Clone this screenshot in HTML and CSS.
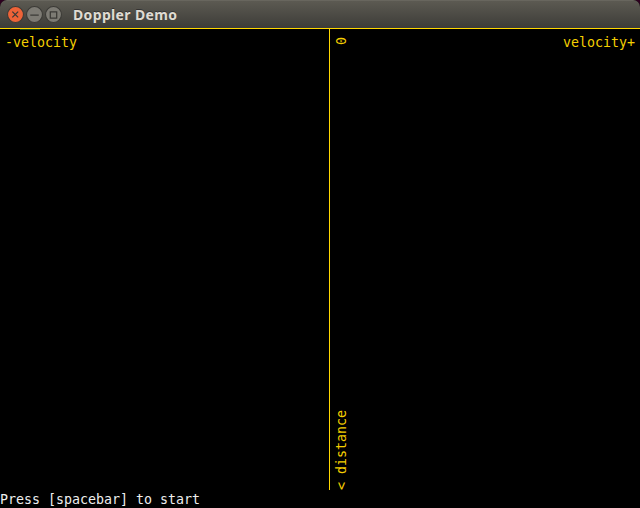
FILE: index.html
```html
<!DOCTYPE html>
<html lang="en">
<head>
<meta charset="utf-8">
<title>Doppler Demo</title>
<link rel="stylesheet" href="styles.css">
</head>
<body>
<main class="window">
  <header class="titlebar">
    <div class="controls">
      <svg class="control close" viewBox="0 0 16 16"><circle cx="8" cy="8" r="7.5"/><path d="M5 5.3l5.5 5.4M10.5 5.3L5 10.7"/></svg>
      <svg class="control" viewBox="0 0 16 16"><circle cx="8" cy="8" r="7.5"/><path d="M4 8.5h8"/></svg>
      <svg class="control" viewBox="0 0 16 16"><circle cx="8" cy="8" r="7.5"/><path d="M5 5.5h6v6H5z"/></svg>
    </div>
    <h1 class="title">Doppler Demo</h1>
  </header>
  <section class="plot">
    <div class="half negative"><span class="trace"></span><span class="label">-velocity</span></div>
    <div class="half positive">
      <div class="axis"><span>&lt; distance</span><span>0</span></div>
      <span class="label">velocity+</span>
    </div>
  </section>
  <footer class="status">Press [spacebar] to start</footer>
</main>
</body>
</html>
```

FILE: styles.css
```css
* { box-sizing: border-box; }
body { margin: 0; background: #2c001e; }
.window {
  width: 640px; height: 508px; display: flex; flex-direction: column;
  background: #000; border-radius: 7px 7px 0 0; overflow: hidden;
  font: 13.3px/16px "DejaVu Sans Mono", monospace; letter-spacing: -0.01px;
}
.titlebar {
  height: 28px; display: flex; align-items: center; padding: 0 7px; gap: 11px;
  background: linear-gradient(#5c5a52, #3d3c38); border-top: 1px solid #68665e;
}
.controls { display: flex; gap: 3px; }
.control { width: 17px; height: 17px; fill: #7d7b74; stroke: #3b3a36; stroke-width: 1; }
.controls { gap: 2px; }
.control path { fill: none; stroke-width: 1.2; }
.close { fill: #ee6338; }
.title {
  margin: 0; color: #dfdbd2; font: bold 14px/20px "Noto Sans", sans-serif;
  letter-spacing: 0.35px; text-shadow: 0 -1px #333;
}
.plot { height: 462px; display: flex; border-top: 1px solid #ffd700; color: #f5cf00; }
.half { display: flex; }
.negative { width: 329px; flex-direction: column; padding-left: 5px; }
.trace { width: 20px; height: 1px; margin: 0 0 5px 15px; background: #1b4617; }
.positive {
  width: 311px; justify-content: space-between; align-items: flex-start;
  border-left: 1px solid #ffd700; padding: 6px 5px 0 4px;
}
.axis {
  height: 455px; display: flex; justify-content: space-between;
  writing-mode: vertical-rl; transform: rotate(180deg); padding-bottom: 2px;
}
.status { height: 18px; line-height: 20px; color: #eee; }
```
